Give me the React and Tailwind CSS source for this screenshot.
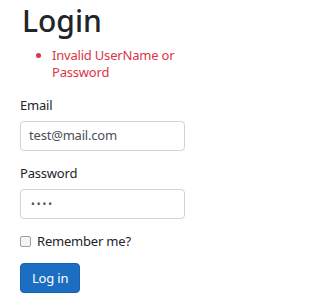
export default function App() {
  return (
    <div className="w-[227px] h-[300px] overflow-hidden bg-white px-[20px] text-[13px] tracking-[-0.2px] text-[#212529] font-['Noto_Sans',sans-serif]">
      <h1 className="mt-[3px] ml-[2px] text-[30px] leading-[36px] font-medium tracking-normal text-[#212529]">Login</h1>

      {/* validation summary */}
      <div className="mt-[8px] w-[170px] text-[#dc3545]">
        <ul className="list-disc pl-[32px] leading-[17px]">
          <li>Invalid UserName or Password</li>
        </ul>
      </div>

      <div className="mt-[14px]">
        <label className="block leading-[21px] mb-[5px]">Email</label>
        <div className="w-[165px] h-[30px] flex items-center px-[8px] border border-[#ced4da] rounded-[4px] text-[#495057]">
          test@mail.com
        </div>
      </div>

      <div className="mt-[12px]">
        <label className="block leading-[21px] mb-[5px]">Password</label>
        <div className="w-[165px] h-[30px] flex items-center px-[10px] border border-[#ced4da] rounded-[4px] text-[#495057]">
          <span className="text-[10px] tracking-[2px]">••••</span>
        </div>
      </div>

      <div className="mt-[12px] flex items-center gap-[6px] leading-[21px]">
        <span className="w-[11px] h-[11px] border border-[#a0a0a0] rounded-[2px] bg-[#f4f4f4]" />
        <span className="text-[#212529]">Remember me?</span>
      </div>

      <button className="mt-[11px] h-[30px] px-[11px] rounded-[4px] bg-[#1b6ec2] border border-[#1861ac] text-white leading-[21px]">
        Log in
      </button>
    </div>
  );
}
